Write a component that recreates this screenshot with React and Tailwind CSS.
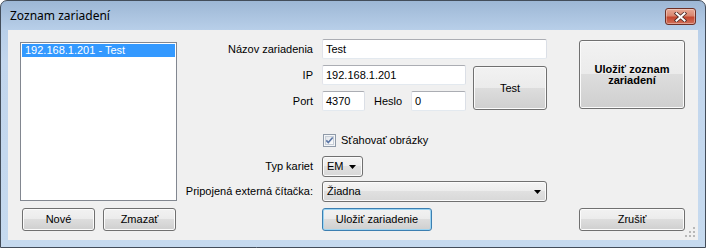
const btn =
  "flex items-center justify-center rounded-[3px] border border-[#707070] bg-[linear-gradient(to_bottom,#f2f2f2_0%,#ebebeb_50%,#dddddd_50%,#cfcfcf_100%)] shadow-[inset_0_0_0_1px_#fbfbfb] text-[11px] text-black leading-none";

const tb =
  "flex items-center h-[20px] bg-white border border-[#abadb3] border-l-[#e2e3ea] border-r-[#dbdfe6] border-b-[#e3e9ef] rounded-[2px] pl-[3px] text-[11px] text-black";

function Arrow() {
  return (
    <svg width="7" height="4" viewBox="0 0 7 4">
      <path d="M0 0 H7 L3.5 4 Z" fill="#000" />
    </svg>
  );
}

function Label({ children, className = "" }) {
  return (
    <div className={"w-[136px] shrink-0 text-right text-[11px] text-black " + className}>
      {children}
    </div>
  );
}

export default function App() {
  return (
    <div className="w-[706px] h-[248px] overflow-hidden font-[family-name:'Liberation_Sans',Arial,sans-serif]">
      <div className="w-[706px] h-[248px] rounded-t-[7px] border border-[#434d5a] bg-[linear-gradient(to_bottom,#9db7d5_0px,#b8cfe9_29px,#c2d6ed_60px,#c6daef_100%)] flex flex-col">
        {/* Title bar */}
        <div className="h-[29px] flex items-center shrink-0">
          <div className="pl-[9px] pt-[1px] text-[12px] text-black font-[family-name:'Noto_Sans',sans-serif]">
            Zoznam zariadení
          </div>
          <div className="ml-auto mr-[9px] mt-[2px] w-[31px] h-[17px] rounded-[3px] border border-[#6e3026] bg-[linear-gradient(to_bottom,#e8a996_0%,#d9866f_45%,#c5472f_55%,#d0705a_100%)] shadow-[inset_0_0_0_1px_rgba(255,255,255,0.35)] flex items-center justify-center">
            <svg width="13" height="10" viewBox="0 0 13 10">
              <path d="M2.5 1.5 L10.5 8.5 M10.5 1.5 L2.5 8.5" stroke="#4a2a26" strokeWidth="3.6" strokeLinecap="square" />
              <path d="M2.5 1.5 L10.5 8.5 M10.5 1.5 L2.5 8.5" stroke="#ffffff" strokeWidth="2" strokeLinecap="square" />
            </svg>
          </div>
        </div>

        {/* Client */}
        <div className="ml-[7px] w-[690px] h-[210px] bg-[#f0f0f0] relative flex flex-col">
          <div className="h-[172px] flex items-start shrink-0">
            {/* Listbox */}
            <div className="ml-[12px] mt-[12px] w-[157px] h-[159px] bg-white border border-[#828790] p-[1px] shrink-0">
              <div className="h-[13px] bg-[#3399ff] text-white text-[11px] leading-[13px] pl-[3px]">
                192.168.1.201 - Test
              </div>
            </div>

            {/* Middle form */}
            <div className="w-[370px] mt-[9px] flex flex-col shrink-0">
              <div className="flex items-center">
                <Label>Názov zariadenia</Label>
                <div className={tb + " ml-[9px] w-[225px]"}>Test</div>
              </div>

              <div className="flex items-start mt-[6px]">
                <div className="flex flex-col">
                  <div className="flex items-center">
                    <Label>IP</Label>
                    <div className={tb + " ml-[9px] w-[144px]"}>192.168.1.201</div>
                  </div>
                  <div className="flex items-center mt-[6px]">
                    <Label>Port</Label>
                    <div className={tb + " ml-[9px] w-[43px]"}>4370</div>
                    <div className="ml-[9px] w-[37px] text-[11px] text-black">Heslo</div>
                    <div className={tb + " w-[55px]"}>0</div>
                  </div>
                </div>
                <div className={btn + " ml-[7px] mt-[1px] w-[74px] h-[44px]"}>Test</div>
              </div>

              <div className="flex items-center mt-[22px] ml-[146px] h-[14px]">
                <svg width="13" height="13" viewBox="0 0 13 13">
                  <defs>
                    <linearGradient id="cbg" x1="0" y1="0" x2="1" y2="1">
                      <stop offset="0" stopColor="#dfe3e8" />
                      <stop offset="1" stopColor="#ffffff" />
                    </linearGradient>
                  </defs>
                  <rect x="0.5" y="0.5" width="12" height="12" fill="#f4f6f8" stroke="#8f9aa8" />
                  <rect x="2.5" y="2.5" width="8" height="8" fill="url(#cbg)" stroke="#c7ced7" />
                  <path d="M3.3 6.4 L5.3 8.6 L9.7 3.4" fill="none" stroke="#5b76a6" strokeWidth="1.6" />
                </svg>
                <div className="ml-[5px] text-[11px] text-black">Sťahovať obrázky</div>
              </div>

              <div className="flex items-center mt-[9px]">
                <Label>Typ kariet</Label>
                <div className="ml-[9px] w-[41px] h-[21px] rounded-[3px] border border-[#707070] bg-[linear-gradient(to_bottom,#f4f4f4_0%,#ececec_50%,#e0e0e0_50%,#d8d8d8_100%)] shadow-[inset_0_0_0_1px_#fbfbfb] flex items-center pl-[4px] pr-[6px] text-[11px] text-black">
                  <span>EM</span>
                  <span className="ml-auto flex">
                    <Arrow />
                  </span>
                </div>
              </div>

              <div className="flex items-center mt-[4px]">
                <Label>Pripojená externá čítačka:</Label>
                <div className="ml-[9px] w-[225px] h-[21px] rounded-[3px] border border-[#707070] bg-[linear-gradient(to_bottom,#f4f4f4_0%,#ececec_50%,#e0e0e0_50%,#d8d8d8_100%)] shadow-[inset_0_0_0_1px_#fbfbfb] flex items-center pl-[4px] pr-[5px] text-[11px] text-black">
                  <span>Žiadna</span>
                  <span className="ml-auto flex">
                    <Arrow />
                  </span>
                </div>
              </div>
            </div>

            {/* Right big button */}
            <div className={btn + " ml-[32px] mt-[10px] w-[106px] h-[69px] flex-col font-bold leading-[14px] text-center"}>
              <span>Uložiť zoznam</span>
              <span>zariadení</span>
            </div>
          </div>

          {/* Bottom buttons */}
          <div className="flex items-center mt-[6px] pl-[14px]">
            <div className={btn + " w-[73px] h-[23px]"}>Nové</div>
            <div className={btn + " ml-[8px] w-[73px] h-[23px]"}>Zmazať</div>
            <div className="ml-[146px] w-[110px] h-[23px] rounded-[3px] border border-[#3c7fb1] bg-[linear-gradient(to_bottom,#f2f2f2_0%,#ebebeb_50%,#dddddd_50%,#cfcfcf_100%)] shadow-[inset_0_0_0_1px_#9bd4f2] flex items-center justify-center text-[11px] text-black">
              Uložiť zariadenie
            </div>
            <div className={btn + " ml-[147px] w-[106px] h-[23px]"}>Zrušiť</div>
          </div>

          {/* Size grip */}
          <svg className="absolute right-[2px] bottom-[2px]" width="11" height="11" viewBox="0 0 11 11">
            <rect x="8" y="0" width="2" height="2" fill="#b8b8b8" />
            <rect x="4" y="4" width="2" height="2" fill="#b8b8b8" />
            <rect x="8" y="4" width="2" height="2" fill="#b8b8b8" />
            <rect x="0" y="8" width="2" height="2" fill="#b8b8b8" />
            <rect x="4" y="8" width="2" height="2" fill="#b8b8b8" />
            <rect x="8" y="8" width="2" height="2" fill="#b8b8b8" />
          </svg>
        </div>
      </div>
    </div>
  );
}
